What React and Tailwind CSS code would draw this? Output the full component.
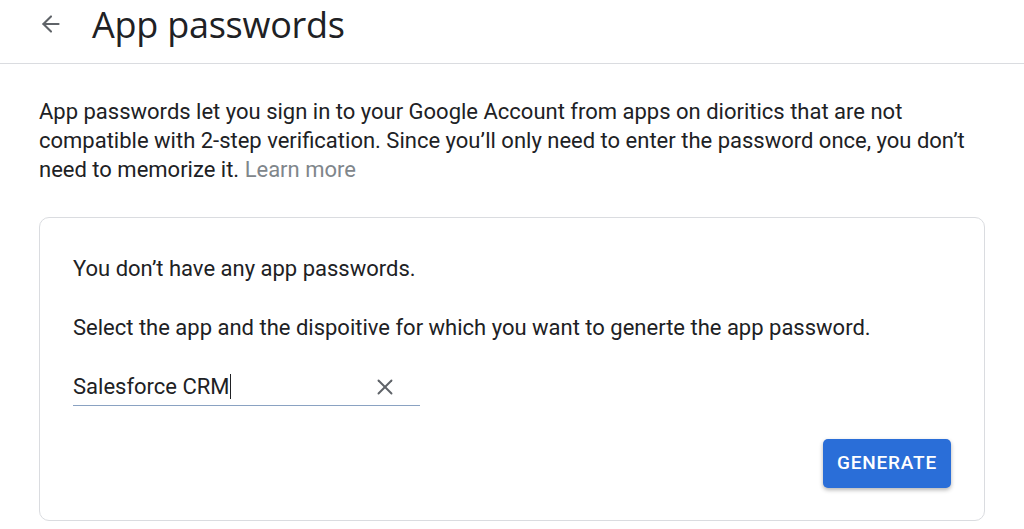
import { ArrowLeft, X } from "lucide-react"

const App = () => {
  return (
    <div className="min-h-screen bg-white text-[#202124] font-['Roboto',Arial,sans-serif] overflow-hidden">
      <header className="flex items-start h-[64px] border-b border-[#dadce0] pl-[38px]">
        <ArrowLeft size={26} strokeWidth={1.9} className="text-[#5f6368] mt-[11px]" />
        <h1 className="ml-[28px] mt-[3px] text-[36px] leading-[44px] font-['Open_Sans',sans-serif] tracking-[-0.25px]">
          App passwords
        </h1>
      </header>

      <main className="pl-[39px] pr-[39px]">
        <p className="mt-[33px] text-[22px] leading-[29px] max-w-[946px]">
          App passwords let you sign in to your Google Account from apps on dioritics that are not compatible with 2-step
          verification. Since you’ll only need to enter the password once, you don’t need to memorize it.{" "}
          <span className="text-[#80868b]">Learn more</span>
        </p>

        <section className="mt-[33px] w-[946px] h-[304px] border border-[#dadce0] rounded-[10px] px-[33px] pt-[36px]">
          <p className="text-[22px] leading-[29px]">You don’t have any app passwords.</p>
          <p className="mt-[30px] text-[22px] leading-[29px]">
            Select the app and the dispoitive for which you want to generte the app password.
          </p>

          <div className="mt-[30px] w-[347px] flex items-center border-b-[1.5px] border-[#8aa2c2] pb-[4px]">
            <span className="flex-1 text-[22px] leading-[29px]">
              Salesforce CRM<span className="inline-block w-[1.5px] h-[25px] bg-[#202124] align-[-5px]" />
            </span>
            <X size={26} strokeWidth={1.75} className="text-[#5f6368] mr-[22px]" />
          </div>

          <div className="flex justify-end mt-[33px]">
            <button className="w-[128px] h-[49px] rounded-[5px] bg-[#2a6ed8] text-white text-[19px] font-medium tracking-[0.8px] shadow-[0_2px_4px_rgba(0,0,0,0.3)]">
              GENERATE
            </button>
          </div>
        </section>
      </main>
    </div>
  )
}

export default App
